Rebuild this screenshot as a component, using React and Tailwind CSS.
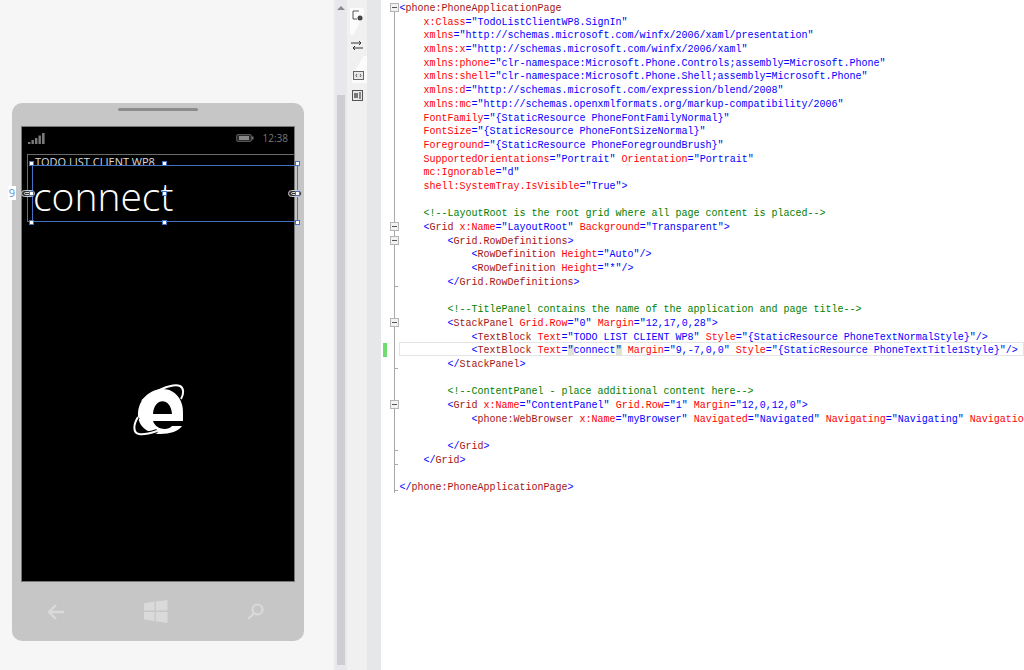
import React from 'react';

const CODE = [
  [0, '<phone:PhoneApplicationPage'],
  [4, 'x:Class="TodoListClientWP8.SignIn"'],
  [4, 'xmlns="http://schemas.microsoft.com/winfx/2006/xaml/presentation"'],
  [4, 'xmlns:x="http://schemas.microsoft.com/winfx/2006/xaml"'],
  [4, 'xmlns:phone="clr-namespace:Microsoft.Phone.Controls;assembly=Microsoft.Phone"'],
  [4, 'xmlns:shell="clr-namespace:Microsoft.Phone.Shell;assembly=Microsoft.Phone"'],
  [4, 'xmlns:d="http://schemas.microsoft.com/expression/blend/2008"'],
  [4, 'xmlns:mc="http://schemas.openxmlformats.org/markup-compatibility/2006"'],
  [4, 'FontFamily="{StaticResource PhoneFontFamilyNormal}"'],
  [4, 'FontSize="{StaticResource PhoneFontSizeNormal}"'],
  [4, 'Foreground="{StaticResource PhoneForegroundBrush}"'],
  [4, 'SupportedOrientations="Portrait" Orientation="Portrait"'],
  [4, 'mc:Ignorable="d"'],
  [4, 'shell:SystemTray.IsVisible="True">'],
  [0, ''],
  [4, '<!--LayoutRoot is the root grid where all page content is placed-->'],
  [4, '<Grid x:Name="LayoutRoot" Background="Transparent">'],
  [8, '<Grid.RowDefinitions>'],
  [12, '<RowDefinition Height="Auto"/>'],
  [12, '<RowDefinition Height="*"/>'],
  [8, '</Grid.RowDefinitions>'],
  [0, ''],
  [8, '<!--TitlePanel contains the name of the application and page title-->'],
  [8, '<StackPanel Grid.Row="0" Margin="12,17,0,28">'],
  [12, '<TextBlock Text="TODO LIST CLIENT WP8" Style="{StaticResource PhoneTextNormalStyle}"/>'],
  [12, '<TextBlock Text="connect" Margin="9,-7,0,0" Style="{StaticResource PhoneTextTitle1Style}"/>'],
  [8, '</StackPanel>'],
  [0, ''],
  [8, '<!--ContentPanel - place additional content here-->'],
  [8, '<Grid x:Name="ContentPanel" Grid.Row="1" Margin="12,0,12,0">'],
  [12, '<phone:WebBrowser x:Name="myBrowser" Navigated="Navigated" Navigating="Navigating" Navigation'],
  [0, ''],
  [8, '</Grid>'],
  [4, '</Grid>'],
  [0, ''],
  [0, '</phone:PhoneApplicationPage>'],
];

const FOLD_LINES = [0, 16, 17, 23, 29];
const TICK_LINES = [20, 26, 32, 33];
const ACTIVE_LINE = 25;

const tokenize = (text) => {
  if (text.trim().startsWith('<!--')) {
    return [{ text, color: 'text-[#008000]' }];
  }
  const out = [];
  const re = /(<\/?)([\w:.]+)|(\/?>)|("[^"]*")|([\w:.]+)|(=|\s+)/g;
  let m;
  while ((m = re.exec(text))) {
    if (m[1]) {
      out.push({ text: m[1], color: 'text-[#0000ff]' });
      out.push({ text: m[2], color: 'text-[#a31515]' });
    } else if (m[5]) {
      out.push({ text: m[5], color: 'text-[#ff0000]' });
    } else {
      out.push({ text: m[0], color: 'text-[#0000ff]' });
    }
  }
  return out;
};

const CodeLine = ({ index, indent, text }) => {
  const active = index === ACTIVE_LINE;
  return (
    <div className="flex h-[13.69px]">
      {/* marge de pliage */}
      <div className="relative w-[18px] shrink-0">
        {active && <div className="absolute left-[2px] top-px h-full w-[4px] bg-[#6fdc6f]" />}
        <div
          className={`absolute left-[13px] w-px bg-[#a8a8a8] ${index === 0 ? 'top-[7px] h-[7px]' : 'top-0 h-full'} ${index === CODE.length - 1 ? 'h-[11px]' : ''}`}
        />
        {TICK_LINES.includes(index) && <div className="absolute left-[13px] top-[12px] h-px w-[4px] bg-[#a8a8a8]" />}
        {index === CODE.length - 1 && <div className="absolute left-[13px] top-[11px] h-px w-[4px] bg-[#a8a8a8]" />}
        {FOLD_LINES.includes(index) && (
          <div className="absolute left-[9px] top-[3px] flex h-[9px] w-[9px] items-center justify-center border border-[#b4b4b4] bg-[#f2f2f2]">
            <div className="h-px w-[5px] bg-[#555]" />
          </div>
        )}
      </div>
      <div
        className={`min-w-0 flex-1 overflow-x-clip whitespace-pre pl-[0.5px] leading-[17.7px] ${active ? 'ring-1 ring-inset ring-[#e4e4e4]' : ''}`}
      >
        {' '.repeat(indent)}
        {tokenize(text).map((t, i) => {
          if (active && t.text === '"connect"') {
            return (
              <span key={i} className="text-[#0000ff]">
                <span className="bg-[#dfe3d6]">"</span>connect<span className="bg-[#dfe3d6]">"</span>
              </span>
            );
          }
          return (
            <span key={i} className={t.color}>
              {t.text}
            </span>
          );
        })}
      </div>
    </div>
  );
};

const Handle = ({ className }) => (
  <div className={`absolute h-[5px] w-[5px] border border-[#4472c4] bg-white ${className}`} />
);

const LinkPill = ({ className }) => (
  <div className={`absolute flex h-[7px] w-[14px] items-center justify-center rounded-full border border-[#ccc] bg-[#333] ${className}`}>
    <div className="h-[3px] w-[8px] rounded-full border border-[#ddd]" />
  </div>
);

const SignalIcon = () => (
  <svg width="18" height="11" viewBox="0 0 18 11" fill="#7a7a7a">
    <rect x="0" y="9" width="2.4" height="2" />
    <rect x="3.5" y="7" width="2.4" height="4" />
    <rect x="7" y="5" width="2.4" height="6" />
    <rect x="10.5" y="2.5" width="2.4" height="8.5" />
    <rect x="14" y="0" width="2.6" height="11" />
  </svg>
);

const BatteryIcon = () => (
  <svg width="18" height="8" viewBox="0 0 18 8">
    <rect x="0.5" y="0.5" width="15" height="7" rx="1.5" fill="#2a2a2a" stroke="#555" />
    <rect x="3" y="2" width="10" height="4" fill="#8a8a8a" />
    <rect x="16" y="2.5" width="1.5" height="3" fill="#777" />
  </svg>
);

const IeLogo = () => (
  <svg width="60" height="60" viewBox="0 0 60 60" fill="none">
    <path
      fill="#fff"
      fillRule="evenodd"
      d="M53 40H23C26 49 38 50 42 45H52C49 50 40 53 30 53C17 53 7 44 8 32C9 18 20 8 33 8C45 8 54 19 53 33ZM23 33C24 16 41 16 42 33Z"
    />
    <path d="M12 20C22 11 42 2 50 5C54 7 54 13 51 18" stroke="#fff" strokeWidth="2" />
    <path d="M8 36C3 44 3 52 9 53C14 54 21 52 27 50" stroke="#000" strokeWidth="4" />
    <path d="M8 36C3 44 3 52 9 53C14 54 21 52 27 50" stroke="#fff" strokeWidth="2" />
  </svg>
);

const PhoneNav = () => (
  <div className="flex h-[59px] items-center justify-between pl-[26px] pr-[31px]">
    <svg width="18" height="16" viewBox="0 0 18 16" fill="none" stroke="#dadada" strokeWidth="2.4">
      <path d="M17 8H2M9 1L2 8l7 7" />
    </svg>
    <svg width="24" height="23" viewBox="0 0 24 23" fill="#dadada">
      <path d="M0 3.2 10.5 1.6V10.6H0ZM11.8 1.4 23.5 0V10.6H11.8ZM0 12H10.5V21L0 19.6ZM11.8 12H23.5V23L11.8 21.2Z" />
    </svg>
    <svg width="17" height="17" viewBox="0 0 17 17" fill="none" stroke="#dadada" strokeWidth="2.2">
      <circle cx="10.5" cy="6.5" r="5" />
      <path d="M7 10.5 1 16" />
    </svg>
  </div>
);

const Phone = () => (
  <div className="flex h-[538px] w-[292px] flex-col rounded-[10px] bg-[#c6c6c6] px-[9px]">
    <div className="mx-auto mt-[5px] h-[3px] w-[80px] rounded-full bg-[#8c8c8c]" />
    <div className="mt-[15px] h-[456px] border border-[#777] bg-black">
      <div className="flex h-[21px] items-center justify-between pl-[6px] pr-[6px] pt-[1px]">
        <SignalIcon />
        <div className="flex items-center gap-[9px]">
          <BatteryIcon />
          <span className="text-[10px] text-[#777] [font-family:'Open_Sans',sans-serif]">12:38</span>
        </div>
      </div>
      <div className="mt-[6px]">
        <div className="pl-[13px] text-[11px] leading-[16px] text-[#dcdcdc] [font-family:'Open_Sans',sans-serif]">
          TODO LIST CLIENT WP8
        </div>
        <div className="pl-[11px] text-[39px] font-light leading-[52px] text-white [font-family:'Open_Sans',sans-serif]">
          connect
        </div>
      </div>
      <div className="mt-[159px] flex justify-center pl-[3px]">
        <IeLogo />
      </div>
    </div>
    <PhoneNav />
  </div>
);

const ToolbarIcons = () => (
  <div className="flex w-[20px] shrink-0 flex-col items-center bg-[#f0f0f0] pt-[8px]">
    <div className="flex h-[27px] w-[14px] justify-center bg-[linear-gradient(to_bottom_right,#fbfbfb_62%,transparent_62%)] pt-[2px]">
      <svg width="11" height="11" viewBox="0 0 11 11" fill="none">
        <path d="M7 1H1v8h4" stroke="#555" />
        <circle cx="8" cy="8" r="2.5" fill="#444" />
      </svg>
    </div>
    <svg width="12" height="11" viewBox="0 0 12 11" fill="none" stroke="#333" className="mt-[5px]">
      <path d="M0 3h10M8 1l2 2-2 2M12 8H2M4 6 2 8l2 2" />
    </svg>
    <div className="mt-[5px] flex h-[27px] w-[15px] justify-center self-end bg-[linear-gradient(to_top_left,#fbfbfb_62%,transparent_62%)] pr-[3px] pt-[15px]">
      <svg width="11" height="9" viewBox="0 0 11 9" fill="none">
        <rect x="0.5" y="0.5" width="10" height="8" fill="#e8e8e8" stroke="#666" />
        <path d="M4 3 3 4.5 4 6M7 3l1 1.5L7 6" stroke="#555" />
      </svg>
    </div>
    <svg width="11" height="11" viewBox="0 0 11 11" fill="none" className="mt-[7px]">
      <rect x="0.5" y="0.5" width="10" height="10" fill="#e8e8e8" stroke="#555" />
      <rect x="2" y="3" width="4" height="5" fill="#777" />
      <rect x="7" y="2" width="2" height="7" fill="#888" />
    </svg>
  </div>
);

const App = () => {
  return (
    <div className="flex h-[670px] w-[1024px] overflow-hidden bg-white">
      {/* surface du designer */}
      <div className="relative w-[333px] shrink-0 bg-[#f6f6f6] pl-[12px] pt-[103px]">
        <Phone />
        <div className="absolute left-[27px] top-[154px] h-[68px] w-[268px] border border-r-0 border-[#6a6a6a]" />
        <div className="absolute left-[32px] top-[165px] h-[57px] w-[266px] border border-[#4472c4]" />
        <Handle className="left-[29px] top-[161px]" />
        <Handle className="left-[162px] top-[161px]" />
        <Handle className="left-[295px] top-[161px]" />
        <LinkPill className="left-[21px] top-[190px]" />
        <LinkPill className="left-[288px] top-[190px]" />
        <Handle className="left-[29px] top-[191px]" />
        <Handle className="left-[162px] top-[191px]" />
        <Handle className="left-[295px] top-[191px]" />
        <Handle className="left-[29px] top-[220px]" />
        <Handle className="left-[162px] top-[220px]" />
        <Handle className="left-[295px] top-[220px]" />
        <div className="absolute left-[8px] top-[186px] w-[8px] bg-white text-center text-[11px] leading-[14px] text-[#5b8fe0] [font-family:'Open_Sans',sans-serif]">
          9
        </div>
      </div>

      {/* barre de défilement */}
      <div className="flex w-[14px] shrink-0 flex-col items-center border-l-2 border-[#f0f0f3] bg-[#e8e8ec]">
        <div className="mt-[6px] h-0 w-0 border-x-[4px] border-b-[4px] border-x-transparent border-b-[#8a8a92]" />
        <div className="mt-[85px] h-[570px] w-[8px] bg-[#cdcdd2]" />
      </div>

      <ToolbarIcons />
      <div className="w-[14px] shrink-0 bg-[#e6e7e8]" />

      {/* éditeur XAML */}
      <div className="min-w-0 flex-1 text-[10px] [font-family:'Liberation_Mono',monospace]">
        {CODE.map(([indent, text], i) => (
          <CodeLine key={i} index={i} indent={indent} text={text} />
        ))}
      </div>
    </div>
  );
};

export default App;
